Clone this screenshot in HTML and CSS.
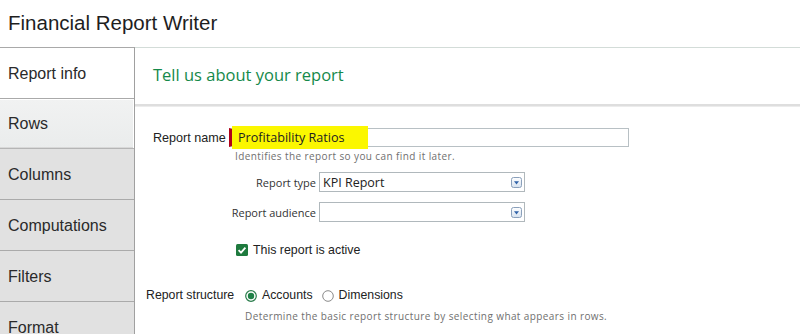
FILE: index.html
```html
<!DOCTYPE html>
<html>
<head>
<meta charset="utf-8">
<link rel="stylesheet" href="styles.css">
</head>
<body>
<header class="app-title">Financial Report Writer</header>
<div class="layout">
  <nav class="nav">
    <div class="nav-item selected">Report info</div>
    <div class="nav-item hover">Rows</div>
    <div class="nav-item">Columns</div>
    <div class="nav-item">Computations</div>
    <div class="nav-item">Filters</div>
    <div class="nav-item">Format</div>
  </nav>
  <main class="main">
    <div class="main-head">Tell us about your report</div>
    <div class="form">
      <div class="row-name">
        <div class="label-name">Report name</div>
        <div class="textbox required"><span class="mark">Profitability Ratios</span></div>
      </div>
      <div class="help help-name">Identifies the report so you can find it later.</div>
      <div class="row-select first">
        <div class="label-sel">Report type</div>
        <div class="select"><span class="sel-text">KPI Report</span>
          <svg class="arrow" width="11" height="11" viewBox="0 0 11 11"><defs><linearGradient id="g1" x1="0" y1="0" x2="0" y2="1"><stop offset="0" stop-color="#ffffff"/><stop offset="1" stop-color="#d6e2f0"/></linearGradient></defs><rect x="0.5" y="0.5" width="10" height="10" rx="2" fill="url(#g1)" stroke="#8aa0bb"/><path d="M3 4.2 L8 4.2 L5.5 7.4 Z" fill="#2f62a8"/></svg>
        </div>
      </div>
      <div class="row-select second">
        <div class="label-sel">Report audience</div>
        <div class="select"><span class="sel-text"></span>
          <svg class="arrow" width="11" height="11" viewBox="0 0 11 11"><defs><linearGradient id="g2" x1="0" y1="0" x2="0" y2="1"><stop offset="0" stop-color="#ffffff"/><stop offset="1" stop-color="#d6e2f0"/></linearGradient></defs><rect x="0.5" y="0.5" width="10" height="10" rx="2" fill="url(#g2)" stroke="#8aa0bb"/><path d="M3 4.2 L8 4.2 L5.5 7.4 Z" fill="#2f62a8"/></svg>
        </div>
      </div>
      <div class="check-row">
        <svg class="checkbox" width="12" height="12" viewBox="0 0 12 12"><rect x="0" y="0" width="12" height="12" rx="1.5" fill="#1e7a3e"/><path d="M2.6 6.2 L5 8.6 L9.4 3.6" fill="none" stroke="#ffffff" stroke-width="1.8"/></svg>
        <span>This report is active</span>
      </div>
      <div class="structure-row">
        <div class="label-struct">Report structure</div>
        <svg class="radio" width="12" height="12" viewBox="0 0 12 12"><circle cx="6" cy="6" r="5.3" fill="#fff" stroke="#2b7d4c" stroke-width="1.2"/><circle cx="6" cy="6" r="3.2" fill="#1e8046"/></svg>
        <span class="opt">Accounts</span>
        <svg class="radio" width="12" height="12" viewBox="0 0 12 12"><circle cx="6" cy="6" r="5.3" fill="#fff" stroke="#8a8a8a" stroke-width="1"/></svg>
        <span class="opt">Dimensions</span>
      </div>
      <div class="help help-struct">Determine the basic report structure by selecting what appears in rows.</div>
    </div>
  </main>
</div>
</body>
</html>
```

FILE: styles.css
```css
html, body {
  margin: 0;
  padding: 0;
  background: #ffffff;
  overflow: hidden;
}
body {
  font-family: "Liberation Sans", Arial, sans-serif;
  color: #222;
  width: 800px;
  height: 334px;
}
.app-title {
  height: 47px;
  box-sizing: border-box;
  padding: 11px 0 0 8px;
  font-size: 20.5px;
  line-height: 24px;
  color: #1e1e1e;
}
.layout {
  display: flex;
  height: 287px;
  overflow: hidden;
}
.nav {
  width: 134px;
  flex: none;
  border-top: 1px solid #a9a9a9;
  border-right: 1px solid #a0a0a0;
  background: #e1e1e1;
}
.nav-item {
  height: 50px;
  border-bottom: 1px solid #aaaaaa;
  padding-left: 8px;
  font-size: 16px;
  line-height: 51px;
  color: #2a2a2a;
  background: #e1e1e1;
}
.nav-item.selected {
  background: #ffffff;
}
.nav-item.hover {
  background: linear-gradient(#f1f2f2, #eaecec);
  box-shadow: inset 0 1px 0 #fff, inset -1px 0 0 #fff, inset 0 -1px 0 #d8d8d8;
  height: 49px;
  line-height: 50px;
  border-bottom: 1px solid #b5b5b5;
}
.main {
  flex: 1;
  border-top: 1px solid #d3dcd8;
}
.main-head {
  height: 58px;
  box-sizing: border-box;
  padding: 16px 0 0 18px;
  font-family: "Open Sans", sans-serif;
  font-size: 16.5px;
  line-height: 22px;
  color: #15894a;
  border-bottom: 2px solid #dedede;
  box-shadow: 0 1px 0 #ececec;
}
.form {
  padding: 22px 0 0 11px;
}
.row-name {
  display: flex;
  align-items: center;
  margin-left: 7px;
  height: 19px;
}
.label-name {
  width: 76px;
  font-size: 12.6px;
}
.textbox {
  width: 396px;
  height: 17px;
  border: 1px solid #b8c0c4;
  background: #fff;
  display: flex;
  align-items: center;
}
.textbox.required {
  border-left: 3px solid #b0001a;
}
.mark {
  display: inline-block;
  background: #fbf700;
  font-family: "Open Sans", sans-serif;
  font-size: 12.6px;
  color: #222;
  line-height: 17px;
  padding: 3px 23px 3px 6px;
  margin: -3px 0 -3px 0;
}
.help {
  font-family: "Open Sans", sans-serif;
  font-size: 10px;
  color: #6f6f6f;
  line-height: 14px;
  letter-spacing: 0.4px;
}
.help-name {
  margin: 2px 0 0 89px;
}
.row-select {
  display: flex;
  align-items: center;
  margin-left: 83px;
  height: 20px;
}
.row-select.first { margin-top: 9px; }
.row-select.second { margin-top: 10px; }
.label-sel {
  width: 87px;
  padding-right: 3px;
  text-align: right;
  font-family: "Open Sans", sans-serif;
  font-size: 11px;
  color: #333;
}
.select {
  width: 199px;
  height: 18px;
  border: 1px solid #b0b8bc;
  display: flex;
  align-items: center;
  justify-content: space-between;
  padding: 0 2px 0 3px;
}
.sel-text {
  font-family: "Open Sans", sans-serif;
  font-size: 12.5px;
  color: #222;
}
.arrow { flex: none; }
.check-row {
  display: flex;
  align-items: center;
  gap: 5px;
  margin: 22px 0 0 90px;
  font-size: 12.4px;
  height: 12px;
}
.checkbox { flex: none; }
.structure-row {
  display: flex;
  align-items: center;
  margin-top: 31px;
  height: 16px;
  font-size: 12.3px;
}
.label-struct {
  width: 99px;
}
.radio { flex: none; margin-right: 5px; margin-top: 2px; }
.opt { margin-right: 9px; }
.help-struct {
  margin: 6px 0 0 99px;
}
```
